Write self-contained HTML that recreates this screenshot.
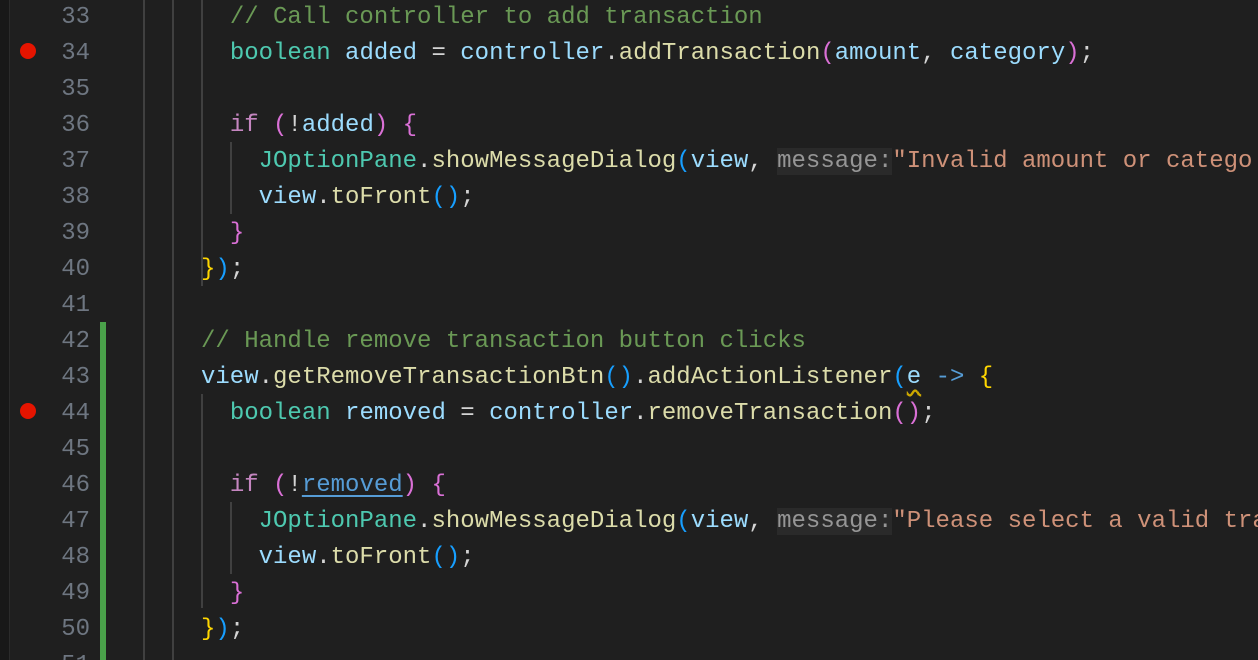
<!DOCTYPE html>
<html><head><meta charset="utf-8"><style>
html,body{margin:0;padding:0;width:1258px;height:660px;overflow:hidden;background:#1f1f1f;}
#w{position:relative;width:1258px;height:660px;overflow:hidden;}
.strip{position:absolute;left:0;top:0;width:9px;height:660px;background:#181818;}
.edge{position:absolute;left:9px;top:0;width:1px;height:660px;background:#2b2b2b;}
.g{position:absolute;width:2px;background:#404040;}
.ln{position:absolute;left:0;width:90px;text-align:right;font:24px/36px "Liberation Mono",monospace;color:#6e7681;}
.bp{position:absolute;left:20px;width:16px;height:16px;border-radius:50%;background:#e51400;}
.code{position:absolute;left:201px;top:0;margin:0;font:24px/36px "Liberation Mono",monospace;color:#d4d4d4;white-space:pre;}
.c{color:#6a9955}.t{color:#4ec9b0}.v{color:#9cdcfe}.f{color:#dcdcaa}.k{color:#c586c0}.s{color:#ce9178}
.y{color:#ffd700}.p{color:#da70d6}.b{color:#179fff}.a{color:#569cd6}
.h{color:#969696;background:#2a2a2a}
.u{color:#569cd6;text-decoration:underline;text-underline-offset:4px}
.sq{text-decoration:underline wavy #cca700;text-underline-offset:6px}
</style></head><body><div id="w">
<div class="strip"></div><div class="edge"></div>
<div class="g" style="left:143px;top:0;height:660px"></div>
<div class="g" style="left:172px;top:0;height:660px"></div>
<div class="g" style="left:201px;top:0;height:286px"></div>
<div class="g" style="left:230px;top:142px;height:72px"></div>
<div class="g" style="left:201px;top:394px;height:214px"></div>
<div class="g" style="left:230px;top:502px;height:72px"></div>
<div style="position:absolute;left:100px;top:322px;width:6px;height:338px;background:#4aa14a"></div>
<div class="bp" style="top:43px"></div>
<div class="bp" style="top:403px"></div>
<div class="ln" style="top:0">33<br>34<br>35<br>36<br>37<br>38<br>39<br>40<br>41<br>42<br>43<br>44<br>45<br>46<br>47<br>48<br>49<br>50<br>51</div>
<pre class="code">  <span class="c">// Call controller to add transaction</span>
  <span class="t">boolean</span> <span class="v">added</span> = <span class="v">controller</span>.<span class="f">addTransaction</span><span class="p">(</span><span class="v">amount</span>, <span class="v">category</span><span class="p">)</span>;

  <span class="k">if</span> <span class="p">(</span>!<span class="v">added</span><span class="p">)</span> <span class="p">{</span>
    <span class="t">JOptionPane</span>.<span class="f">showMessageDialog</span><span class="b">(</span><span class="v">view</span>, <span class="h">message:</span><span class="s">"Invalid amount or catego</span>
    <span class="v">view</span>.<span class="f">toFront</span><span class="b">()</span>;
  <span class="p">}</span>
<span class="y">}</span><span class="b">)</span>;

<span class="c">// Handle remove transaction button clicks</span>
<span class="v">view</span>.<span class="f">getRemoveTransactionBtn</span><span class="b">()</span>.<span class="f">addActionListener</span><span class="b">(</span><span class="v sq">e</span> <span class="a">-&gt;</span> <span class="y">{</span>
  <span class="t">boolean</span> <span class="v">removed</span> = <span class="v">controller</span>.<span class="f">removeTransaction</span><span class="p">()</span>;

  <span class="k">if</span> <span class="p">(</span>!<span class="u">removed</span><span class="p">)</span> <span class="p">{</span>
    <span class="t">JOptionPane</span>.<span class="f">showMessageDialog</span><span class="b">(</span><span class="v">view</span>, <span class="h">message:</span><span class="s">"Please select a valid tra</span>
    <span class="v">view</span>.<span class="f">toFront</span><span class="b">()</span>;
  <span class="p">}</span>
<span class="y">}</span><span class="b">)</span>;</pre>
</div></body></html>
